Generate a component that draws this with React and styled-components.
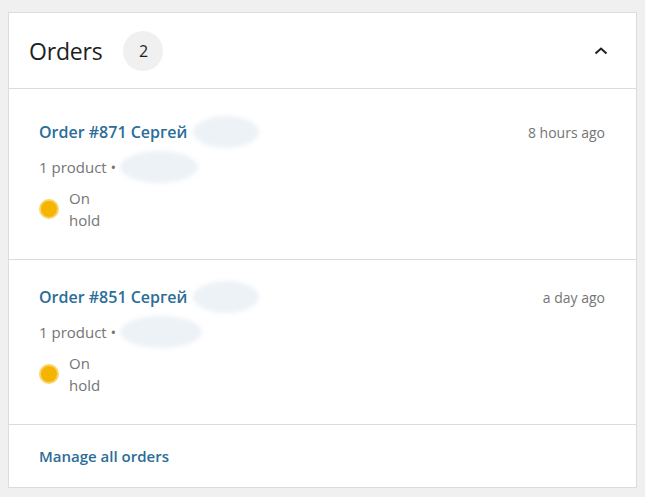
import React from 'react';
import styled, { createGlobalStyle } from 'styled-components';

const GlobalStyle = createGlobalStyle`
    body{
        margin: 0;
        background: #f0f0f1;
        font-family: "Open Sans", "Noto Sans", sans-serif;
    }
`

const Page = styled.div`
    padding: 12px 8px 9px 8px;
`

const Card = styled.section`
    background: #fff;
    border: 1px solid #dcdcde;
    width: 627px;
`

const Header = styled.div`
    height: 75px;
    display: flex;
    align-items: center;
    padding: 0 23px 0 20px;
    border-bottom: 1px solid #dcdcde;
    h2{
        margin: 0;
        font-size: 23px;
        font-weight: 400;
        color: #1e1e1e;
        letter-spacing: -0.2px;
    }
`

const Badge = styled.span`
    width: 40px;
    height: 40px;
    border-radius: 50%;
    background: #f0f0f0;
    display: flex;
    align-items: center;
    justify-content: center;
    margin-left: 21px;
    font-size: 16px;
    color: #1e1e1e;
`

const Toggle = styled.button`
    margin-left: auto;
    border: 0;
    background: none;
    padding: 0;
    display: flex;
    cursor: pointer;
`

const OrderRow = styled.div`
    padding: ${p => (p.$first ? '31px' : '25px')} 31px 28px 30px;
    border-bottom: 1px solid #dcdcde;
`

const TopLine = styled.div`
    display: flex;
    align-items: center;
    justify-content: space-between;
    height: 24px;
`

const Title = styled.a`
    display: flex;
    align-items: center;
    font-size: 16px;
    font-weight: 600;
    color: #2b6d98;
    text-decoration: none;
`

const Time = styled.span`
    font-size: 14px;
    color: #757575;
`

const Meta = styled.div`
    display: flex;
    align-items: center;
    height: 24px;
    margin-top: 11px;
    font-size: 15px;
    color: #757575;
`

const Blur = styled.span`
    display: inline-block;
    width: ${p => p.$w}px;
    height: 32px;
    margin-left: ${p => p.$ml}px;
    border-radius: 50%;
    background: #edf2f7;
    filter: blur(2px);
`

const Status = styled.div`
    display: flex;
    align-items: center;
    margin-top: 8px;
`

const Dot = styled.span`
    width: 16px;
    height: 16px;
    border-radius: 50%;
    background: #f5b400;
    border: 2px solid #f9d46d;
    margin-right: 10px;
`

const StatusText = styled.span`
    font-size: 15px;
    line-height: 22px;
    color: #757575;
    width: 40px;
`

const Footer = styled.div`
    padding: 20px 31px 19px 30px;
    a{
        font-size: 15px;
        line-height: 23px;
        font-weight: 600;
        color: #2b6d98;
        text-decoration: none;
    }
`

const orders = [
    { num: 871, name: 'Сергей', time: '8 hours ago', w: 78 },
    { num: 851, name: 'Сергей', time: 'a day ago', w: 82 },
];

const App = () => {
    return (
        <Page>
            <GlobalStyle />
            <Card>
                <Header>
                    <h2>Orders</h2>
                    <Badge>2</Badge>
                    <Toggle aria-label="collapse">
                        <svg width="24" height="24" viewBox="0 0 24 24">
                            <path d="M6.5 14.5 L12 9.5 L17.5 14.5" fill="none" stroke="#1e1e1e" strokeWidth="2" />
                        </svg>
                    </Toggle>
                </Header>
                {orders.map((o, i) => (
                    <OrderRow key={o.num} $first={i === 0}>
                        <TopLine>
                            <Title href="#">
                                Order #{o.num} {o.name}
                                <Blur $w={66} $ml={6} />
                            </Title>
                            <Time>{o.time}</Time>
                        </TopLine>
                        <Meta>
                            1 product •<Blur $w={o.w} $ml={4} />
                        </Meta>
                        <Status>
                            <Dot />
                            <StatusText>On hold</StatusText>
                        </Status>
                    </OrderRow>
                ))}
                <Footer>
                    <a href="#">Manage all orders</a>
                </Footer>
            </Card>
        </Page>
    );
};

export default App;
